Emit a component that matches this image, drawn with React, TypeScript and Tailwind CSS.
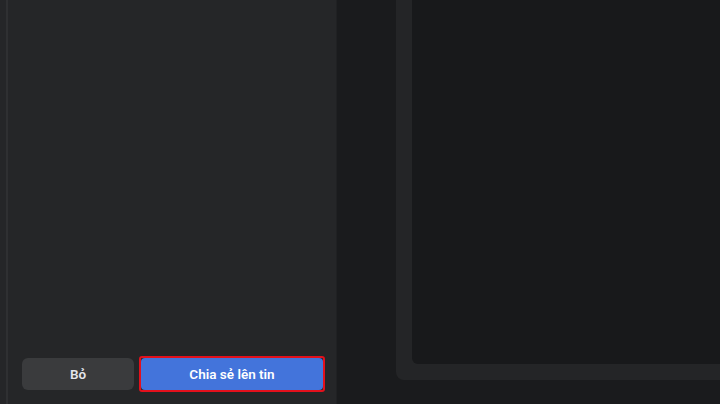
export default function App() {
  return (
    <div className="w-[720px] h-[404px] flex overflow-hidden bg-[#1a1b1d]" style={{ fontFamily: 'Roboto, "Noto Sans", sans-serif' }}>
      <div className="w-[337px] shrink-0 h-full flex bg-[#252628]">
        <div className="w-[6px] shrink-0 h-full" />
        <div className="w-[2px] shrink-0 h-full bg-[#2f3032]" />
        <div className="flex-1 h-full flex flex-col justify-end pl-[14px] pb-[12px]">
          <div className="flex items-center gap-[5px]">
            <button className="w-[112px] h-[32px] rounded-[6px] bg-[#3a3b3d] text-[#e4e6eb] text-[13.5px] font-semibold">
              Bỏ
            </button>
            <div className="border-2 border-[#e3101c] rounded-[3px]">
              <button className="w-[182px] h-[32px] rounded-[4px] bg-[#4374db] text-white text-[13.5px] font-semibold block">
                Chia sẻ lên tin
              </button>
            </div>
          </div>
        </div>
        <div className="w-px shrink-0 h-full bg-[#202123]" />
      </div>
      <div className="flex-1 min-w-0 h-full flex flex-col pl-[59px] pb-[24px]">
        <div className="-mt-[24px] flex-1 w-[400px] shrink-0 bg-[#242527] rounded-[8px] p-[16px]">
          <div className="w-full h-full bg-[#18191b] rounded-[6px]" />
        </div>
      </div>
    </div>
  );
}
